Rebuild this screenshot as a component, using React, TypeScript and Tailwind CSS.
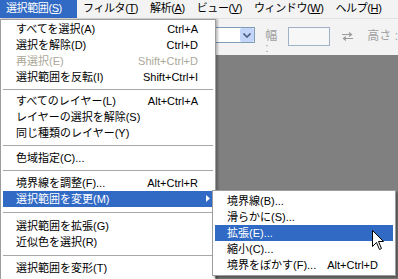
import React from 'react';

// ============================================================
// Menu data
// ============================================================

type Row =
  | { kind: 'sep'; h: string }
  | {
      kind: 'item';
      label: string;
      shortcut?: string;
      disabled?: boolean;
      active?: boolean;
      sub?: boolean;
    };

const MAIN_MENU: Row[] = [
  { kind: 'item', label: 'すべてを選択(A)', shortcut: 'Ctrl+A' },
  { kind: 'item', label: '選択を解除(D)', shortcut: 'Ctrl+D' },
  { kind: 'item', label: '再選択(E)', shortcut: 'Shift+Ctrl+D', disabled: true },
  { kind: 'item', label: '選択範囲を反転(I)', shortcut: 'Shift+Ctrl+I' },
  { kind: 'sep', h: 'h-[8px]' },
  { kind: 'item', label: 'すべてのレイヤー(L)', shortcut: 'Alt+Ctrl+A' },
  { kind: 'item', label: 'レイヤーの選択を解除(S)' },
  { kind: 'item', label: '同じ種類のレイヤー(Y)' },
  { kind: 'sep', h: 'h-[9px]' },
  { kind: 'item', label: '色域指定(C)...' },
  { kind: 'sep', h: 'h-[9px]' },
  { kind: 'item', label: '境界線を調整(F)...', shortcut: 'Alt+Ctrl+R' },
  { kind: 'item', label: '選択範囲を変更(M)', active: true, sub: true },
  { kind: 'sep', h: 'h-[11px]' },
  { kind: 'item', label: '選択範囲を拡張(G)' },
  { kind: 'item', label: '近似色を選択(R)' },
  { kind: 'sep', h: 'h-[10px]' },
  { kind: 'item', label: '選択範囲を変形(T)' },
];

const SUB_MENU: Row[] = [
  { kind: 'item', label: '境界線(B)...' },
  { kind: 'item', label: '滑らかに(S)...' },
  { kind: 'item', label: '拡張(E)...', active: true },
  { kind: 'item', label: '縮小(C)...' },
  { kind: 'item', label: '境界をぼかす(F)...', shortcut: 'Alt+Ctrl+D' },
];

const MENUBAR = [
  { label: '選択範囲', key: 'S', active: true },
  { label: 'フィルタ', key: 'T' },
  { label: '解析', key: 'A' },
  { label: 'ビュー', key: 'V' },
  { label: 'ウィンドウ', key: 'W' },
  { label: 'ヘルプ', key: 'H' },
];

// ============================================================
// Sub-components
// ============================================================

function MenuRows({ rows, padL }: { rows: Row[]; padL: string }) {
  return (
    <div className="flex flex-col px-[2px]">
      {rows.map((r, i) =>
        r.kind === 'sep' ? (
          <div key={i} className={`${r.h} flex items-center`}>
            <div className="w-full border-t border-[#a7a7a7]" />
          </div>
        ) : (
          <div
            key={i}
            className={`relative flex h-[16px] items-center justify-between ${padL} pr-[15px] ${
              r.active ? 'bg-[#316ac5] text-white' : r.disabled ? 'text-[#aca899]' : 'text-black'
            }`}
          >
            <span className="whitespace-nowrap">{r.label}</span>
            {r.shortcut && <span className="whitespace-nowrap">{r.shortcut}</span>}
            {r.sub && (
              <svg className="absolute right-[3px] top-[4px]" width="4" height="7" viewBox="0 0 4 7">
                <path d="M0 0 L4 3.5 L0 7 Z" fill="#ffffff" />
              </svg>
            )}
          </div>
        )
      )}
    </div>
  );
}

function SwapIcon() {
  return (
    <svg width="11" height="9" viewBox="0 0 11 9">
      <path d="M0 2.5 H9 M7 0.5 L9.5 2.5 L7 4.5" stroke="#9a9a9a" strokeWidth="1.2" fill="none" />
      <path d="M11 6.5 H2 M4 4.5 L1.5 6.5 L4 8.5" stroke="#9a9a9a" strokeWidth="1.2" fill="none" />
    </svg>
  );
}

function Cursor() {
  return (
    <svg
      className="absolute left-[372px] top-[230px]"
      width="13"
      height="21"
      viewBox="0 0 13 21"
    >
      <path
        d="M0.5 0.5 L0.5 16.5 L4.5 12.5 L7.5 19.5 L9.5 18.5 L6.5 11.5 L11.5 11.5 Z"
        fill="#ffffff"
        stroke="#000000"
        strokeWidth="1"
      />
    </svg>
  );
}

// ============================================================
// Main Component
// ============================================================

export default function App() {
  return (
    <div className="relative flex h-[279px] w-[398px] flex-col overflow-hidden bg-[#f3f3f3] font-['Liberation_Sans','Noto_Sans_CJK_JP',sans-serif] text-[11px] leading-none">
      {/* Menu bar */}
      <div className="flex h-[19px] shrink-0 items-stretch border-b border-[#e2e2e2] text-[11px] tracking-[-0.4px] text-black">
        {MENUBAR.map((m) => (
          <div
            key={m.key}
            className={`flex shrink-0 items-center px-[6px] pb-[1px] whitespace-nowrap ${
              m.active ? 'w-[77px] bg-[#316ac5] text-white' : ''
            }`}
          >
            {m.label}(<span className="underline underline-offset-1">{m.key}</span>)
          </div>
        ))}
      </div>

      {/* Options bar */}
      <div className="flex h-[36px] shrink-0 items-start pl-[150px] pt-[8px] text-[12px] text-[#a0a0a0]">
        <div className="flex h-[16px] w-[108px] items-stretch justify-end border border-[#7f9db9] bg-white">
          <div className="flex w-[14px] items-center justify-center rounded-[2px] bg-[#c4d5fa]">
            <svg width="8" height="5" viewBox="0 0 8 5">
              <path d="M0.5 0.5 L4 4 L7.5 0.5" stroke="#4d6185" strokeWidth="1.6" fill="none" />
            </svg>
          </div>
        </div>
        <span className="ml-[10px] mt-[3px]">幅 :</span>
        <div className="ml-[5px] h-[19px] w-[43px] border border-[#9fb2c8] bg-[#f7f7f7]" />
        <div className="ml-[12px] mt-[5px]">
          <SwapIcon />
        </div>
        <span className="ml-[14px] mt-[3px] whitespace-nowrap">高さ :</span>
      </div>

      {/* Canvas */}
      <div className="flex-1 bg-[#808080]" />

      {/* Dropdown menu */}
      <div className="absolute left-0 top-[19px] h-[261px] w-[216px] border border-[#9d9d9d] bg-white pt-[1px] shadow-[2px_0_2px_rgba(0,0,0,0.25)]">
        <MenuRows rows={MAIN_MENU} padL="pl-[13px]" />
      </div>

      {/* Submenu */}
      <div className="absolute left-[212px] top-[190px] h-[86px] w-[184px] border border-[#9d9d9d] bg-white pt-[2px] shadow-[2px_2px_2px_rgba(0,0,0,0.35)]">
        <MenuRows rows={SUB_MENU} padL="pl-[12px]" />
      </div>

      <Cursor />
    </div>
  );
}
